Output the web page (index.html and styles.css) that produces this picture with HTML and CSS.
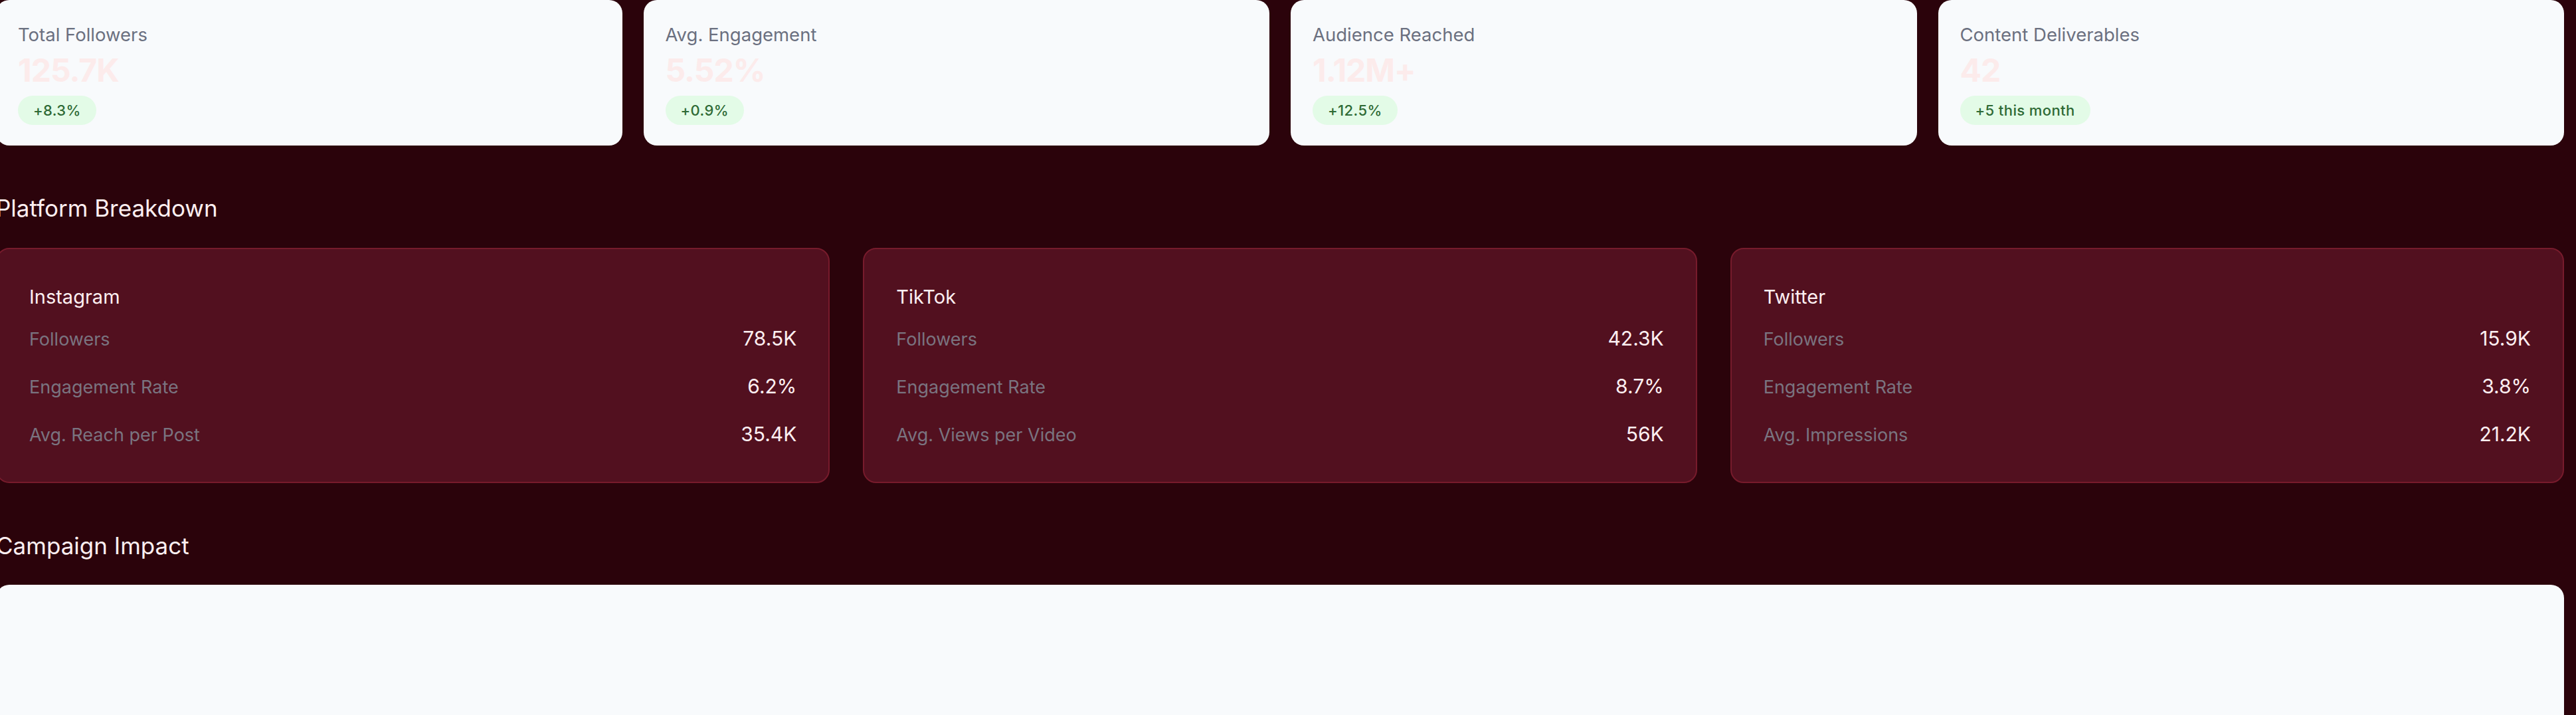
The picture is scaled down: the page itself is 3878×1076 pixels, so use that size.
FILE: index.html
```html
<!DOCTYPE html>
<html lang="en">
<head>
<meta charset="utf-8">
<title>Influencer Dashboard</title>
<link rel="stylesheet" href="styles.css">
</head>
<body>
<div class="wrap">
  <section class="stats">
    <div class="stat">
      <div class="stat-label">Total Followers</div>
      <div class="stat-value">125.7K</div>
      <span class="badge">+8.3%</span>
    </div>
    <div class="stat">
      <div class="stat-label">Avg. Engagement</div>
      <div class="stat-value">5.52%</div>
      <span class="badge">+0.9%</span>
    </div>
    <div class="stat">
      <div class="stat-label">Audience Reached</div>
      <div class="stat-value">1.12M+</div>
      <span class="badge">+12.5%</span>
    </div>
    <div class="stat">
      <div class="stat-label">Content Deliverables</div>
      <div class="stat-value">42</div>
      <span class="badge">+5 this month</span>
    </div>
  </section>

  <h2 class="section-title">Platform Breakdown</h2>
  <section class="platforms">
    <div class="platform">
      <h3 class="platform-name">Instagram</h3>
      <div class="row"><span class="row-label">Followers</span><span class="row-value">78.5K</span></div>
      <div class="row"><span class="row-label">Engagement Rate</span><span class="row-value">6.2%</span></div>
      <div class="row"><span class="row-label">Avg. Reach per Post</span><span class="row-value">35.4K</span></div>
    </div>
    <div class="platform">
      <h3 class="platform-name">TikTok</h3>
      <div class="row"><span class="row-label">Followers</span><span class="row-value">42.3K</span></div>
      <div class="row"><span class="row-label">Engagement Rate</span><span class="row-value">8.7%</span></div>
      <div class="row"><span class="row-label">Avg. Views per Video</span><span class="row-value">56K</span></div>
    </div>
    <div class="platform">
      <h3 class="platform-name">Twitter</h3>
      <div class="row"><span class="row-label">Followers</span><span class="row-value">15.9K</span></div>
      <div class="row"><span class="row-label">Engagement Rate</span><span class="row-value">3.8%</span></div>
      <div class="row"><span class="row-label">Avg. Impressions</span><span class="row-value">21.2K</span></div>
    </div>
  </section>

  <h2 class="section-title impact-title">Campaign Impact</h2>
  <section class="impact"></section>
</div>
</body>
</html>
```

FILE: styles.css
```css
html, body {
  margin: 0;
  padding: 0;
  background: #2b030b;
  overflow: hidden;
}

body {
  font-family: Inter, "Noto Sans", "Liberation Sans", sans-serif;
  color: #fdeff1;
}

.wrap {
  margin-left: -6px;
  width: 3866px;
}

.stats {
  display: grid;
  grid-template-columns: repeat(4, 1fr);
  gap: 32px;
}

.stat {
  background: #f8fafc;
  border-radius: 20px;
  padding: 32px 33px 31px;
  display: flex;
  flex-direction: column;
  align-items: flex-start;
}

.stat-label {
  font-size: 27.5px;
  line-height: 40px;
  color: #6b7080;
}

.stat-value {
  margin-top: 6px;
  font-size: 48px;
  line-height: 56px;
  font-weight: 700;
  letter-spacing: -1px;
  color: #fcebeb;
}

.badge {
  margin-top: 10px;
  height: 44px;
  display: inline-flex;
  align-items: center;
  padding: 0 23px;
  border-radius: 22px;
  background: #e3fbe7;
  color: #2e6a35;
  font-size: 22px;
  font-weight: 500;
  letter-spacing: 0.4px;
}

.section-title {
  margin: 72px 0 38px;
  font-size: 35px;
  line-height: 44px;
  font-weight: 400;
  color: #fdeff1;
}

.impact-title {
  margin-bottom: 37px;
}

.platforms {
  display: grid;
  grid-template-columns: repeat(3, 1fr);
  gap: 50px;
}

.platform {
  background: #52101f;
  border: 2px solid #771b2c;
  border-radius: 20px;
  padding: 54px 48px 52px;
}

.platform-name {
  margin: 0 0 24px;
  font-size: 29px;
  line-height: 36px;
  font-weight: 400;
  color: #fdeff1;
}

.row {
  display: flex;
  justify-content: space-between;
  align-items: baseline;
  height: 40px;
  line-height: 40px;
  overflow: visible;
}

.row + .row {
  margin-top: 32px;
}

.row-label {
  font-size: 27px;
  color: #7a7480;
}

.row-value {
  font-size: 30px;
  color: #fdeff1;
}

.impact {
  background: #f8fafc;
  border-radius: 20px;
  height: 600px;
}
```
